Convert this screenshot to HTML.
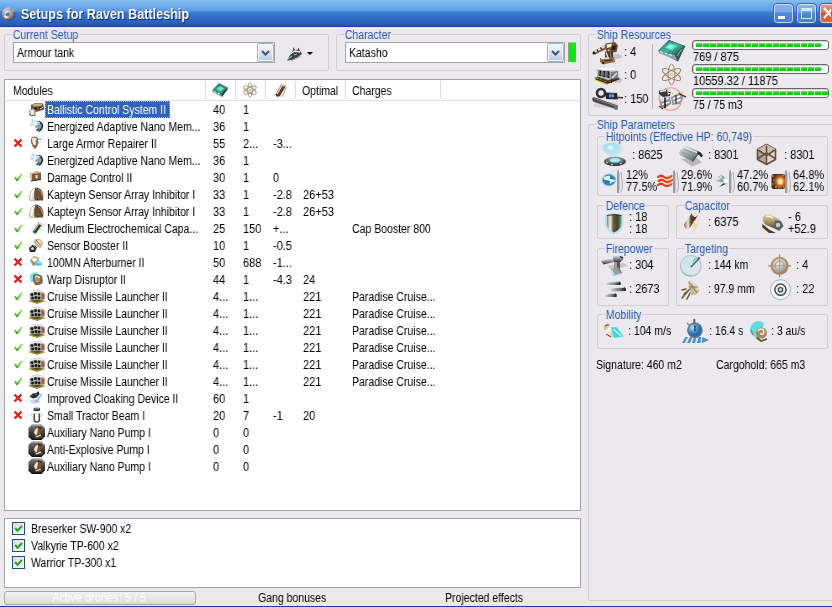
<!DOCTYPE html><html><head><meta charset="utf-8"><style>
*{margin:0;padding:0;box-sizing:border-box}
html,body{width:832px;height:607px;overflow:hidden;background:#EBE9ED}
body{position:relative;font-family:"Liberation Sans",sans-serif;font-size:11px;color:#000}
.a{position:absolute}
.t{position:absolute;white-space:nowrap;font-size:12.5px;line-height:13px;transform-origin:0 0;transform:scaleX(.84);will-change:transform}
.n{transform:scaleX(.88)}
.cap{color:#2356BC;background:#EBE9ED;padding:0 1px}
.grp{position:absolute;border:1px solid #D0CED2;border-radius:2px}
.tb{position:absolute;top:3px;width:21px;height:21px;border:1px solid #3A5FC2;border-radius:4px;box-shadow:inset 0 0 0 1px rgba(235,242,255,.75);background:linear-gradient(#8CB8EE 0,#77A6EA 8px,#4D88DA 9px,#4A7CD2 21px)}
.cl{left:819px;background:linear-gradient(#E59A80 0,#DF7A58 8px,#D9521E 9px,#DE7148 21px)}
.list{position:absolute;background:#fff;border:1px solid #A3A3A3}
.hsep{position:absolute;top:81px;width:2px;height:18px;border-left:1px solid #DCDBDF;border-right:1px solid #fff}
.ic{position:absolute;width:16px;height:16px}
.pb{position:absolute;left:692px;width:137px;height:10px;border:1px solid #686868;border-radius:3px;background:#fff;box-shadow:inset 1px 1px 0 #D4D4D4;overflow:hidden}
.chunks{position:absolute;left:3px;top:2px;height:4px;background:repeating-linear-gradient(90deg,transparent 0,transparent 6px,#fff 6px,#fff 7px),linear-gradient(#86E286 0,#22D422 1.5px,#00CE00 4px)}
</style></head><body>
<svg width="0" height="0" style="position:absolute">
<defs>
<linearGradient id="gBrown" x1="0" y1="0" x2="1" y2="1"><stop offset="0" stop-color="#F2E8DA"/><stop offset=".45" stop-color="#A78A6A"/><stop offset="1" stop-color="#4A3522"/></linearGradient>
<linearGradient id="gBrown2" x1="0" y1="0" x2="0" y2="1"><stop offset="0" stop-color="#C9B08E"/><stop offset="1" stop-color="#5A4028"/></linearGradient>
<linearGradient id="gBrownH" x1="0" y1="0" x2="1" y2="0"><stop offset="0" stop-color="#F8F2EA"/><stop offset=".35" stop-color="#B89A78"/><stop offset=".6" stop-color="#6A4C30"/><stop offset="1" stop-color="#3A2818"/></linearGradient>
<linearGradient id="gSteel" x1="0" y1="0" x2="1" y2="1"><stop offset="0" stop-color="#F4F6F8"/><stop offset=".5" stop-color="#8F9AA6"/><stop offset="1" stop-color="#303840"/></linearGradient>
<linearGradient id="gDark" x1="0" y1="0" x2="0" y2="1"><stop offset="0" stop-color="#8A8A8A"/><stop offset="1" stop-color="#2A2A2A"/></linearGradient>
<linearGradient id="gRig" x1="0" y1="0" x2="0" y2="1"><stop offset="0" stop-color="#7C8088"/><stop offset=".5" stop-color="#3C4048"/><stop offset="1" stop-color="#1A1C20"/></linearGradient>
<radialGradient id="gCyan"><stop offset="0" stop-color="#E8FFFF"/><stop offset=".6" stop-color="#4FD6E6"/><stop offset="1" stop-color="#4FD6E6" stop-opacity="0"/></radialGradient>
<linearGradient id="ck" x1="0" y1="0" x2="0" y2="1"><stop offset="0" stop-color="#B0E468"/><stop offset="1" stop-color="#3CAC18"/></linearGradient>
</defs></svg>
<div class="a" style="left:0;top:0;width:832px;height:27px;background:linear-gradient(#84C0EE 0px,#78B2EC 3px,#5E9AE4 11px,#3B80D2 12px,#3373CD 16px,#2A57B5 25px)"></div>
<div class="a" style="left:0;top:26px;width:832px;height:1px;background:#1A3C9E"></div>
<svg class="a" style="left:0px;top:2px;" width="20" height="22" viewBox="0 0 20 22"><defs><radialGradient id="tor" cx=".4" cy=".35" r=".7"><stop offset="0" stop-color="#F0EAE4"/><stop offset=".55" stop-color="#A89484"/><stop offset="1" stop-color="#4A3C34"/></radialGradient></defs><ellipse cx="9.5" cy="13" rx="6.5" ry="6" fill="#23479A" opacity=".35"/><ellipse cx="8.3" cy="12.3" rx="6.4" ry="6.3" fill="url(#tor)"/><path d="M3 9 Q6 5 10 6 M12 7 L14 10 M4 14 L6 17" stroke="#F4F0EC" stroke-width="1" fill="none" opacity=".7"/><ellipse cx="7.8" cy="12.4" rx="2.4" ry="1.7" transform="rotate(-25 7.8 12.4)" fill="#3A7CD8"/><path d="M5 13.5 Q6 16 8.5 15" stroke="#FFFFFF" stroke-width="1.3" fill="none"/></svg>
<div class="t" style="left:21px;top:6px;font-size:14px;line-height:16px;font-weight:bold;color:#fff;text-shadow:1px 1px 0 #0A246A;transform:scaleX(.9)">Setups for Raven Battleship</div>
<div class="tb" style="left:773px"><div class="a" style="left:4px;top:12px;width:7px;height:3px;background:#fff"></div></div>
<div class="tb" style="left:796px"><div class="a" style="left:4px;top:4px;width:11px;height:11px;border:1px solid #D8E6FA;border-top-width:3px"></div></div>
<div class="tb cl"></div>
<svg class="a" style="left:823px;top:7px;" width="8" height="12" viewBox="0 0 8 12"><path d="M1 1 L10 11 M10 1 L1 11" stroke="#fff" stroke-width="2.2"/></svg>
<div class="grp" style="left:4px;top:34px;width:325px;height:37px"></div>
<div class="t" style="left:12px;top:29px;color:#2356BC;background:#EBE9ED;padding:0 1px">Current Setup</div>
<div class="a" style="left:13px;top:42px;width:262px;height:21px;background:#fff;border:1px solid #A5A5A5"></div>
<div class="t" style="left:17px;top:47px;">Armour tank</div>
<div class="a" style="left:257px;top:43px;width:17px;height:19px;border:1px solid #9CB2DA;border-radius:2px;box-shadow:inset 0 0 0 1px #F4F8FE;background:linear-gradient(#FBFCFF 0,#E0E9F6 35%,#B8CCEA 100%)"></div>
<svg class="a" style="left:261px;top:49px;" width="9" height="8" viewBox="0 0 9 8"><path d="M1 2 L4.5 5.5 L8 2" fill="none" stroke="#4A5262" stroke-width="2"/></svg>
<svg class="a" style="left:282px;top:42px;" width="36" height="24" viewBox="0 0 36 24"><path d="M5 18.5 L8 13 L11 8 L11.5 5 L13 8 L16 7.5 L16.5 5.5 L18 9 L20 11.5 L16 15 L10 18 Z" fill="#3A4044"/><path d="M8 12 L13 9 L18 10" stroke="#F0F4F4" stroke-width="1.3" fill="none"/><path d="M6 17 L10 14 M12 13 L15 12" stroke="#9AB4C0" stroke-width="1.2"/><path d="M9 19 L18 15 L20 12" stroke="#B8B6BA" stroke-width="1" fill="none"/></svg>
<svg class="a" style="left:307px;top:52px;" width="6" height="3" viewBox="0 0 6 3"><path d="M0 0 L6 0 L3 3 Z" fill="#000"/></svg>
<div class="grp" style="left:336px;top:34px;width:245px;height:37px"></div>
<div class="t" style="left:344px;top:29px;color:#2356BC;background:#EBE9ED;padding:0 1px">Character</div>
<div class="a" style="left:345px;top:42px;width:220px;height:21px;background:#fff;border:1px solid #A5A5A5"></div>
<div class="t" style="left:349px;top:47px;">Katasho</div>
<div class="a" style="left:547px;top:43px;width:17px;height:19px;border:1px solid #9CB2DA;border-radius:2px;box-shadow:inset 0 0 0 1px #F4F8FE;background:linear-gradient(#FBFCFF 0,#E0E9F6 35%,#B8CCEA 100%)"></div>
<svg class="a" style="left:551px;top:49px;" width="9" height="8" viewBox="0 0 9 8"><path d="M1 2 L4.5 5.5 L8 2" fill="none" stroke="#4A5262" stroke-width="2"/></svg>
<div class="a" style="left:568px;top:42px;width:9px;height:21px;background:#00F000;border:1px solid #fff;border-left-color:#9A9A9E;border-top-color:#C0B8C8"></div>
<div class="list" style="left:4px;top:79px;width:577px;height:432px"></div>
<div class="t" style="left:13px;top:85px;">Modules</div>
<div class="hsep" style="left:205px"></div>
<div class="hsep" style="left:235px"></div>
<div class="hsep" style="left:265px"></div>
<div class="hsep" style="left:295px"></div>
<div class="hsep" style="left:345px"></div>
<div class="hsep" style="left:440px"></div>
<div class="a" style="left:5px;top:100px;width:575px;height:1px;background:#E2E1E5"></div>
<svg class="a" style="left:206px;top:80px;" width="30" height="20" viewBox="0 0 30 20"><path d="M6.5 10 L13 3.3 L21.6 7.5 L16 16 Z" fill="#1E3234"/><path d="M7 10 L13 4 L21 7.6 L15.5 14 Z" fill="#2E9A88"/><path d="M10.5 9.2 L13.8 6.3 L18 8.2 L14.8 11.2 Z" fill="#6AEAC4"/><path d="M6.5 10 L15.5 14 L16 17 L6.5 12 Z" fill="#7A9C9C"/><path d="M15.5 14 L21.6 7.5 L21.6 9.5 L16 17 Z" fill="#2A4648"/><path d="M8 11.5 L10 12.3 M12 13 L14 14" stroke="#D8F4F0" stroke-width="1"/></svg>
<svg class="a" style="left:236px;top:80px;" width="30" height="20" viewBox="0 0 30 20"><g fill="none" stroke="#A89478" stroke-width=".9"><ellipse cx="14" cy="10" rx="2.4" ry="7"/><ellipse cx="14" cy="10" rx="2.6" ry="7" transform="rotate(60 14 10)"/><ellipse cx="14" cy="10" rx="2.6" ry="7" transform="rotate(-60 14 10)"/></g><circle cx="14" cy="10" r="1.5" fill="#D0C8C0"/></svg>
<svg class="a" style="left:266px;top:80px;" width="30" height="20" viewBox="0 0 30 20"><path d="M9.5 14.5 L15 5 Q17 3.5 19 5 L19.5 6.5 L14 16 Q11.5 17.5 10 16 Z" fill="#5A3A20"/><path d="M11 14 L16 5.5" stroke="#F4EEE6" stroke-width="1.3"/><ellipse cx="17.3" cy="5" rx="2" ry="1.2" transform="rotate(35 17.3 5)" fill="#E0D8D0"/><path d="M18 9 L20 8 L17 15 L15.5 17" stroke="#C8B078" stroke-width="1.2" fill="none"/></svg>
<div class="t" style="left:302px;top:85px;">Optimal</div>
<div class="t" style="left:352px;top:85px;">Charges</div>
<svg class="a" style="left:27px;top:101px;" width="20" height="17" viewBox="0 0 20 17"><path d="M4 4 L8 2 L16 2.5 L17.5 8.5 L9 11 L4 9 Z" fill="#6E5434"/><path d="M5 4 L8 2.5 L15.5 3 L14 5 L7 5.5 Z" fill="#C8AE80"/><path d="M7 6.5 L10 6.5 L10 9 L7 9 Z M12 6 L15 5.5 L15 8 L12 8.5 Z" fill="#2A2016"/><path d="M13 8 L16 6" stroke="#E8DCC0" stroke-width="1"/>
<path d="M2 9 L6 7.5 L8.5 9 L8.5 14 L5 15 L2 13.5 Z" fill="#A8A8A4"/><path d="M3 9.5 L6 8.5 L7 10 L7 13.5 L4 14 Z" fill="#E8E6E0"/><path d="M2 13.5 L5 15 L8.5 14" stroke="#7A5A30" stroke-width="1" fill="none"/></svg>
<div class="a" style="left:45px;top:101px;width:125px;height:17px;background:#3062BA;outline:1px dotted #D8B868;outline-offset:-1px"></div>
<div class="t" style="left:47px;top:104px;color:#fff">Ballistic Control System II</div>
<div class="t n" style="left:213px;top:104px;">40</div>
<div class="t n" style="left:243px;top:104px;">1</div>
<svg class="a" style="left:27px;top:118px;" width="20" height="17" viewBox="0 0 20 17"><circle cx="6" cy="3" r="1.8" fill="#B4DAF4" opacity=".9"/><circle cx="5" cy="6.5" r="1.6" fill="#A8D2F0" opacity=".8"/><circle cx="7" cy="5" r="1.2" fill="#D8EEFA"/>
<path d="M8.5 4 Q12 1.5 15 4.5 L16.5 8 Q15 13 11.5 14 L9 13 L11 10 Q9.5 9 8.5 10.5 L8 8 L11 6.5 Z" fill="#8AA0B0"/><path d="M12 3.5 Q15 5 15.5 8 Q14.5 12 12 13" stroke="#1E3040" stroke-width="1.4" fill="none"/><path d="M9 5.5 Q11 4 13 5" stroke="#F4F8FA" stroke-width="1.3" fill="none"/><path d="M9.5 12.5 L12 10.5" stroke="#2A3A48" stroke-width="1.2"/></svg>
<div class="t" style="left:47px;top:121px;">Energized Adaptive Nano Mem...</div>
<div class="t n" style="left:213px;top:121px;">36</div>
<div class="t n" style="left:243px;top:121px;">1</div>
<svg class="a" style="left:13px;top:138px;" width="10" height="10" viewBox="0 0 10 10"><path d="M1.5 1.5 L8.5 8.5 M8.5 1.5 L1.5 8.5" stroke="#E41A14" stroke-width="2.3"/></svg>
<svg class="a" style="left:27px;top:135px;" width="20" height="17" viewBox="0 0 20 17"><path d="M5 2 Q9 0.8 11 3 L11.5 8 Q10.5 12 8 14 Q6 12.5 4.5 9 Q3 5 5 2 Z" fill="#8A6A48"/><path d="M5 3 Q8 1.8 10 3.5 Q8 6 9 9 Q7 11 6 9 Q4.5 6 5 3 Z" fill="#E8DCC8"/><path d="M7.5 4 Q6.5 7 8 10" stroke="#FFF" stroke-width="1" fill="none"/><path d="M11 4 L15 4" stroke="#5AD8F0" stroke-width="1.5"/></svg>
<div class="t" style="left:47px;top:138px;">Large Armor Repairer II</div>
<div class="t n" style="left:213px;top:138px;">55</div>
<div class="t n" style="left:243px;top:138px;">2...</div>
<div class="t n" style="left:273px;top:138px;">-3...</div>
<svg class="a" style="left:27px;top:152px;" width="20" height="17" viewBox="0 0 20 17"><circle cx="6" cy="3" r="1.8" fill="#B4DAF4" opacity=".9"/><circle cx="5" cy="6.5" r="1.6" fill="#A8D2F0" opacity=".8"/><circle cx="7" cy="5" r="1.2" fill="#D8EEFA"/>
<path d="M8.5 4 Q12 1.5 15 4.5 L16.5 8 Q15 13 11.5 14 L9 13 L11 10 Q9.5 9 8.5 10.5 L8 8 L11 6.5 Z" fill="#8AA0B0"/><path d="M12 3.5 Q15 5 15.5 8 Q14.5 12 12 13" stroke="#1E3040" stroke-width="1.4" fill="none"/><path d="M9 5.5 Q11 4 13 5" stroke="#F4F8FA" stroke-width="1.3" fill="none"/><path d="M9.5 12.5 L12 10.5" stroke="#2A3A48" stroke-width="1.2"/></svg>
<div class="t" style="left:47px;top:155px;">Energized Adaptive Nano Mem...</div>
<div class="t n" style="left:213px;top:155px;">36</div>
<div class="t n" style="left:243px;top:155px;">1</div>
<svg class="a" style="left:13px;top:172px;" width="10" height="10" viewBox="0 0 10 10"><path d="M1.8 5.2 L4.2 8.3 L9 1.8" fill="none" stroke="url(#ck)" stroke-width="1.9" stroke-linejoin="round"/></svg>
<svg class="a" style="left:27px;top:169px;" width="20" height="17" viewBox="0 0 20 17"><path d="M7 4 L8 2.5 L11 2.5 L12 4" stroke="#C8B8A0" stroke-width="1.2" fill="none"/><path d="M3 4.5 L14 3.5 L14 10.5 L4 12 Z" fill="#7A5A38"/><path d="M3 4.5 L5 4.3 L5 11.5 L4 12 Z" fill="#D8C4A8"/><path d="M3 4.5 L14 3.5" stroke="#C8AA88" stroke-width="1"/><rect x="8.5" y="6" width="2.2" height="3.5" fill="#E8D4B8"/><path d="M4 12 L14 10.5" stroke="#3A2616" stroke-width="1"/></svg>
<div class="t" style="left:47px;top:172px;">Damage Control II</div>
<div class="t n" style="left:213px;top:172px;">30</div>
<div class="t n" style="left:243px;top:172px;">1</div>
<div class="t n" style="left:273px;top:172px;">0</div>
<svg class="a" style="left:13px;top:189px;" width="10" height="10" viewBox="0 0 10 10"><path d="M1.8 5.2 L4.2 8.3 L9 1.8" fill="none" stroke="url(#ck)" stroke-width="1.9" stroke-linejoin="round"/></svg>
<svg class="a" style="left:27px;top:186px;" width="20" height="17" viewBox="0 0 20 17"><path d="M2.5 14.5 Q1.5 4 8.5 1.5 Q15.5 1.5 16.5 10 L16 14.5 L12 14.5 L11 10.5 L9 14.5 Z" fill="#6A4C30"/><path d="M2.5 14.5 Q1.5 4 8.5 1.5 Q6.5 6 7.5 14.5 Z" fill="#E4DACC"/><path d="M4.5 12.5 Q4 6 7.5 3" stroke="#FFFFFF" stroke-width="1.5" fill="none"/><path d="M11 3 Q15 5 15.5 11" stroke="#B89A78" stroke-width="1" fill="none"/><path d="M9 14.5 L11 10.5 L12 14.5" fill="#3A2616"/></svg>
<div class="t" style="left:47px;top:189px;">Kapteyn Sensor Array Inhibitor I</div>
<div class="t n" style="left:213px;top:189px;">33</div>
<div class="t n" style="left:243px;top:189px;">1</div>
<div class="t n" style="left:273px;top:189px;">-2.8</div>
<div class="t n" style="left:303px;top:189px;">26+53</div>
<svg class="a" style="left:13px;top:206px;" width="10" height="10" viewBox="0 0 10 10"><path d="M1.8 5.2 L4.2 8.3 L9 1.8" fill="none" stroke="url(#ck)" stroke-width="1.9" stroke-linejoin="round"/></svg>
<svg class="a" style="left:27px;top:203px;" width="20" height="17" viewBox="0 0 20 17"><path d="M2.5 14.5 Q1.5 4 8.5 1.5 Q15.5 1.5 16.5 10 L16 14.5 L12 14.5 L11 10.5 L9 14.5 Z" fill="#6A4C30"/><path d="M2.5 14.5 Q1.5 4 8.5 1.5 Q6.5 6 7.5 14.5 Z" fill="#E4DACC"/><path d="M4.5 12.5 Q4 6 7.5 3" stroke="#FFFFFF" stroke-width="1.5" fill="none"/><path d="M11 3 Q15 5 15.5 11" stroke="#B89A78" stroke-width="1" fill="none"/><path d="M9 14.5 L11 10.5 L12 14.5" fill="#3A2616"/></svg>
<div class="t" style="left:47px;top:206px;">Kapteyn Sensor Array Inhibitor I</div>
<div class="t n" style="left:213px;top:206px;">33</div>
<div class="t n" style="left:243px;top:206px;">1</div>
<div class="t n" style="left:273px;top:206px;">-2.8</div>
<div class="t n" style="left:303px;top:206px;">26+53</div>
<svg class="a" style="left:13px;top:223px;" width="10" height="10" viewBox="0 0 10 10"><path d="M1.8 5.2 L4.2 8.3 L9 1.8" fill="none" stroke="url(#ck)" stroke-width="1.9" stroke-linejoin="round"/></svg>
<svg class="a" style="left:27px;top:220px;" width="20" height="17" viewBox="0 0 20 17"><path d="M5.5 11.5 L12 2.5 L15.5 4.5 L9 13.5 Z" fill="none" stroke="#7EE8F4" stroke-width="2.4" stroke-linejoin="round" opacity=".55"/><path d="M6 11.5 L12 3 Q14 2.5 15 4.5 L9 13 Q7 14 6 11.5 Z" fill="#4A2E18"/><path d="M7 11 L12.5 3.5" stroke="#C8A888" stroke-width="1.2"/><ellipse cx="13.5" cy="3.7" rx="1.8" ry="1" transform="rotate(35 13.5 3.7)" fill="#F0E8E0"/></svg>
<div class="t" style="left:47px;top:223px;">Medium Electrochemical Capa...</div>
<div class="t n" style="left:213px;top:223px;">25</div>
<div class="t n" style="left:243px;top:223px;">150</div>
<div class="t n" style="left:273px;top:223px;">+...</div>
<div class="t" style="left:352px;top:223px;">Cap Booster 800</div>
<svg class="a" style="left:13px;top:240px;" width="10" height="10" viewBox="0 0 10 10"><path d="M1.8 5.2 L4.2 8.3 L9 1.8" fill="none" stroke="url(#ck)" stroke-width="1.9" stroke-linejoin="round"/></svg>
<svg class="a" style="left:27px;top:237px;" width="20" height="17" viewBox="0 0 20 17"><path d="M8 2 Q13 0.5 15.5 5 Q16 9 13 11 L9 9 L7 5 Z" fill="#D8A880"/><path d="M9 3 Q12 2 14 5 Q14 8 12 9 L10 7 Z" fill="#F0E8E0"/><path d="M9 3 L13 8" stroke="#8A6A4A" stroke-width="1"/>
<path d="M2 11 L6 7.5 L10 10 L8 15 L3 15 Z" fill="#2A2420"/><circle cx="5.5" cy="11.5" r="1.6" fill="#D8D0C8"/><path d="M6 8 L9 10.5" stroke="#C89870" stroke-width="1"/></svg>
<div class="t" style="left:47px;top:240px;">Sensor Booster II</div>
<div class="t n" style="left:213px;top:240px;">10</div>
<div class="t n" style="left:243px;top:240px;">1</div>
<div class="t n" style="left:273px;top:240px;">-0.5</div>
<svg class="a" style="left:13px;top:257px;" width="10" height="10" viewBox="0 0 10 10"><path d="M1.5 1.5 L8.5 8.5 M8.5 1.5 L1.5 8.5" stroke="#E41A14" stroke-width="2.3"/></svg>
<svg class="a" style="left:27px;top:254px;" width="20" height="17" viewBox="0 0 20 17"><path d="M3 6 L7 2 L12 4 L11 10 L6 12 Z" fill="#B08A60"/><path d="M4 6 L7 3 L11 5 L9 9 Z" fill="#F4F0EA"/><path d="M9 6 L15 8.5 L15 11 L10 12 L8 10 Z" fill="#40D0DC"/><path d="M10 8 L14 9.5" stroke="#C8F8FF" stroke-width="1"/></svg>
<div class="t" style="left:47px;top:257px;">100MN Afterburner II</div>
<div class="t n" style="left:213px;top:257px;">50</div>
<div class="t n" style="left:243px;top:257px;">688</div>
<div class="t n" style="left:273px;top:257px;">-1...</div>
<svg class="a" style="left:13px;top:274px;" width="10" height="10" viewBox="0 0 10 10"><path d="M1.5 1.5 L8.5 8.5 M8.5 1.5 L1.5 8.5" stroke="#E41A14" stroke-width="2.3"/></svg>
<svg class="a" style="left:27px;top:271px;" width="20" height="17" viewBox="0 0 20 17"><path d="M3 4 Q6 0.5 11 1.5 L5 12 Q2.5 9 3 4 Z" fill="#58D8E8" opacity=".8"/><path d="M6 4 Q11 1.5 15 5 L16 11 Q13 15 8 14 L6 10 Z" fill="#8A6644"/><path d="M8 5 Q11 3.5 13 6 L13 10 L9 11 Z" fill="#EDE4D8"/><path d="M10 6 L10 10 M12 7 L12 10" stroke="#5A3E26" stroke-width="1"/></svg>
<div class="t" style="left:47px;top:274px;">Warp Disruptor II</div>
<div class="t n" style="left:213px;top:274px;">44</div>
<div class="t n" style="left:243px;top:274px;">1</div>
<div class="t n" style="left:273px;top:274px;">-4.3</div>
<div class="t n" style="left:303px;top:274px;">24</div>
<svg class="a" style="left:13px;top:291px;" width="10" height="10" viewBox="0 0 10 10"><path d="M1.8 5.2 L4.2 8.3 L9 1.8" fill="none" stroke="url(#ck)" stroke-width="1.9" stroke-linejoin="round"/></svg>
<svg class="a" style="left:27px;top:288px;" width="20" height="17" viewBox="0 0 20 17"><path d="M2.5 12.5 L2.5 5 Q4.5 2 10 1.8 Q16 2.2 17.5 5 L17.5 12 L10 14 Z" fill="#B4B4B2"/><path d="M3.5 5 Q6 2.8 10 2.8 Q15 3 16 5" stroke="#F4F4F2" stroke-width="1.2" fill="none"/><g fill="#1A1A1A"><circle cx="5" cy="6.5" r="1.5"/><circle cx="8.5" cy="5.5" r="1.5"/><circle cx="12" cy="6" r="1.4"/><circle cx="5.5" cy="10" r="1.5"/><circle cx="9" cy="9.5" r="1.6"/><circle cx="12.2" cy="10" r="1.4"/></g><path d="M14.5 4.5 L17.5 6 L17.5 10.5 L14.5 11.5 Z" fill="#A85A38"/><path d="M1.5 13 L10 15.8 L18.5 13 L10 11.5 Z" fill="#5A5020"/><path d="M3 13.3 L10 14.8 L17 13" stroke="#C8B030" stroke-width=".8" fill="none"/></svg>
<div class="t" style="left:47px;top:291px;">Cruise Missile Launcher II</div>
<div class="t n" style="left:213px;top:291px;">4...</div>
<div class="t n" style="left:243px;top:291px;">1...</div>
<div class="t n" style="left:303px;top:291px;">221</div>
<div class="t" style="left:352px;top:291px;">Paradise Cruise...</div>
<svg class="a" style="left:13px;top:308px;" width="10" height="10" viewBox="0 0 10 10"><path d="M1.8 5.2 L4.2 8.3 L9 1.8" fill="none" stroke="url(#ck)" stroke-width="1.9" stroke-linejoin="round"/></svg>
<svg class="a" style="left:27px;top:305px;" width="20" height="17" viewBox="0 0 20 17"><path d="M2.5 12.5 L2.5 5 Q4.5 2 10 1.8 Q16 2.2 17.5 5 L17.5 12 L10 14 Z" fill="#B4B4B2"/><path d="M3.5 5 Q6 2.8 10 2.8 Q15 3 16 5" stroke="#F4F4F2" stroke-width="1.2" fill="none"/><g fill="#1A1A1A"><circle cx="5" cy="6.5" r="1.5"/><circle cx="8.5" cy="5.5" r="1.5"/><circle cx="12" cy="6" r="1.4"/><circle cx="5.5" cy="10" r="1.5"/><circle cx="9" cy="9.5" r="1.6"/><circle cx="12.2" cy="10" r="1.4"/></g><path d="M14.5 4.5 L17.5 6 L17.5 10.5 L14.5 11.5 Z" fill="#A85A38"/><path d="M1.5 13 L10 15.8 L18.5 13 L10 11.5 Z" fill="#5A5020"/><path d="M3 13.3 L10 14.8 L17 13" stroke="#C8B030" stroke-width=".8" fill="none"/></svg>
<div class="t" style="left:47px;top:308px;">Cruise Missile Launcher II</div>
<div class="t n" style="left:213px;top:308px;">4...</div>
<div class="t n" style="left:243px;top:308px;">1...</div>
<div class="t n" style="left:303px;top:308px;">221</div>
<div class="t" style="left:352px;top:308px;">Paradise Cruise...</div>
<svg class="a" style="left:13px;top:325px;" width="10" height="10" viewBox="0 0 10 10"><path d="M1.8 5.2 L4.2 8.3 L9 1.8" fill="none" stroke="url(#ck)" stroke-width="1.9" stroke-linejoin="round"/></svg>
<svg class="a" style="left:27px;top:322px;" width="20" height="17" viewBox="0 0 20 17"><path d="M2.5 12.5 L2.5 5 Q4.5 2 10 1.8 Q16 2.2 17.5 5 L17.5 12 L10 14 Z" fill="#B4B4B2"/><path d="M3.5 5 Q6 2.8 10 2.8 Q15 3 16 5" stroke="#F4F4F2" stroke-width="1.2" fill="none"/><g fill="#1A1A1A"><circle cx="5" cy="6.5" r="1.5"/><circle cx="8.5" cy="5.5" r="1.5"/><circle cx="12" cy="6" r="1.4"/><circle cx="5.5" cy="10" r="1.5"/><circle cx="9" cy="9.5" r="1.6"/><circle cx="12.2" cy="10" r="1.4"/></g><path d="M14.5 4.5 L17.5 6 L17.5 10.5 L14.5 11.5 Z" fill="#A85A38"/><path d="M1.5 13 L10 15.8 L18.5 13 L10 11.5 Z" fill="#5A5020"/><path d="M3 13.3 L10 14.8 L17 13" stroke="#C8B030" stroke-width=".8" fill="none"/></svg>
<div class="t" style="left:47px;top:325px;">Cruise Missile Launcher II</div>
<div class="t n" style="left:213px;top:325px;">4...</div>
<div class="t n" style="left:243px;top:325px;">1...</div>
<div class="t n" style="left:303px;top:325px;">221</div>
<div class="t" style="left:352px;top:325px;">Paradise Cruise...</div>
<svg class="a" style="left:13px;top:342px;" width="10" height="10" viewBox="0 0 10 10"><path d="M1.8 5.2 L4.2 8.3 L9 1.8" fill="none" stroke="url(#ck)" stroke-width="1.9" stroke-linejoin="round"/></svg>
<svg class="a" style="left:27px;top:339px;" width="20" height="17" viewBox="0 0 20 17"><path d="M2.5 12.5 L2.5 5 Q4.5 2 10 1.8 Q16 2.2 17.5 5 L17.5 12 L10 14 Z" fill="#B4B4B2"/><path d="M3.5 5 Q6 2.8 10 2.8 Q15 3 16 5" stroke="#F4F4F2" stroke-width="1.2" fill="none"/><g fill="#1A1A1A"><circle cx="5" cy="6.5" r="1.5"/><circle cx="8.5" cy="5.5" r="1.5"/><circle cx="12" cy="6" r="1.4"/><circle cx="5.5" cy="10" r="1.5"/><circle cx="9" cy="9.5" r="1.6"/><circle cx="12.2" cy="10" r="1.4"/></g><path d="M14.5 4.5 L17.5 6 L17.5 10.5 L14.5 11.5 Z" fill="#A85A38"/><path d="M1.5 13 L10 15.8 L18.5 13 L10 11.5 Z" fill="#5A5020"/><path d="M3 13.3 L10 14.8 L17 13" stroke="#C8B030" stroke-width=".8" fill="none"/></svg>
<div class="t" style="left:47px;top:342px;">Cruise Missile Launcher II</div>
<div class="t n" style="left:213px;top:342px;">4...</div>
<div class="t n" style="left:243px;top:342px;">1...</div>
<div class="t n" style="left:303px;top:342px;">221</div>
<div class="t" style="left:352px;top:342px;">Paradise Cruise...</div>
<svg class="a" style="left:13px;top:359px;" width="10" height="10" viewBox="0 0 10 10"><path d="M1.8 5.2 L4.2 8.3 L9 1.8" fill="none" stroke="url(#ck)" stroke-width="1.9" stroke-linejoin="round"/></svg>
<svg class="a" style="left:27px;top:356px;" width="20" height="17" viewBox="0 0 20 17"><path d="M2.5 12.5 L2.5 5 Q4.5 2 10 1.8 Q16 2.2 17.5 5 L17.5 12 L10 14 Z" fill="#B4B4B2"/><path d="M3.5 5 Q6 2.8 10 2.8 Q15 3 16 5" stroke="#F4F4F2" stroke-width="1.2" fill="none"/><g fill="#1A1A1A"><circle cx="5" cy="6.5" r="1.5"/><circle cx="8.5" cy="5.5" r="1.5"/><circle cx="12" cy="6" r="1.4"/><circle cx="5.5" cy="10" r="1.5"/><circle cx="9" cy="9.5" r="1.6"/><circle cx="12.2" cy="10" r="1.4"/></g><path d="M14.5 4.5 L17.5 6 L17.5 10.5 L14.5 11.5 Z" fill="#A85A38"/><path d="M1.5 13 L10 15.8 L18.5 13 L10 11.5 Z" fill="#5A5020"/><path d="M3 13.3 L10 14.8 L17 13" stroke="#C8B030" stroke-width=".8" fill="none"/></svg>
<div class="t" style="left:47px;top:359px;">Cruise Missile Launcher II</div>
<div class="t n" style="left:213px;top:359px;">4...</div>
<div class="t n" style="left:243px;top:359px;">1...</div>
<div class="t n" style="left:303px;top:359px;">221</div>
<div class="t" style="left:352px;top:359px;">Paradise Cruise...</div>
<svg class="a" style="left:13px;top:376px;" width="10" height="10" viewBox="0 0 10 10"><path d="M1.8 5.2 L4.2 8.3 L9 1.8" fill="none" stroke="url(#ck)" stroke-width="1.9" stroke-linejoin="round"/></svg>
<svg class="a" style="left:27px;top:373px;" width="20" height="17" viewBox="0 0 20 17"><path d="M2.5 12.5 L2.5 5 Q4.5 2 10 1.8 Q16 2.2 17.5 5 L17.5 12 L10 14 Z" fill="#B4B4B2"/><path d="M3.5 5 Q6 2.8 10 2.8 Q15 3 16 5" stroke="#F4F4F2" stroke-width="1.2" fill="none"/><g fill="#1A1A1A"><circle cx="5" cy="6.5" r="1.5"/><circle cx="8.5" cy="5.5" r="1.5"/><circle cx="12" cy="6" r="1.4"/><circle cx="5.5" cy="10" r="1.5"/><circle cx="9" cy="9.5" r="1.6"/><circle cx="12.2" cy="10" r="1.4"/></g><path d="M14.5 4.5 L17.5 6 L17.5 10.5 L14.5 11.5 Z" fill="#A85A38"/><path d="M1.5 13 L10 15.8 L18.5 13 L10 11.5 Z" fill="#5A5020"/><path d="M3 13.3 L10 14.8 L17 13" stroke="#C8B030" stroke-width=".8" fill="none"/></svg>
<div class="t" style="left:47px;top:376px;">Cruise Missile Launcher II</div>
<div class="t n" style="left:213px;top:376px;">4...</div>
<div class="t n" style="left:243px;top:376px;">1...</div>
<div class="t n" style="left:303px;top:376px;">221</div>
<div class="t" style="left:352px;top:376px;">Paradise Cruise...</div>
<svg class="a" style="left:13px;top:393px;" width="10" height="10" viewBox="0 0 10 10"><path d="M1.5 1.5 L8.5 8.5 M8.5 1.5 L1.5 8.5" stroke="#E41A14" stroke-width="2.3"/></svg>
<svg class="a" style="left:27px;top:390px;" width="20" height="17" viewBox="0 0 20 17"><ellipse cx="8" cy="11.5" rx="5" ry="2.2" fill="#D8D8DC"/><path d="M2.5 6.5 L5.5 3.5 L9 3.2 L11.5 1 L12.5 4 L9.5 7.5 L6 8.5 Z" fill="#26282C"/><path d="M4 6 L6 5 M8 5 L10 4" stroke="#8A8E94" stroke-width=".8"/><path d="M7.5 11.5 L13.5 3.5 L15.5 4.5 L9.5 12.5 Z" fill="#5AAEEA" opacity=".85"/><path d="M9 10.5 L14 4.2" stroke="#C8E8FA" stroke-width="1"/></svg>
<div class="t" style="left:47px;top:393px;">Improved Cloaking Device II</div>
<div class="t n" style="left:213px;top:393px;">60</div>
<div class="t n" style="left:243px;top:393px;">1</div>
<svg class="a" style="left:13px;top:410px;" width="10" height="10" viewBox="0 0 10 10"><path d="M1.5 1.5 L8.5 8.5 M8.5 1.5 L1.5 8.5" stroke="#E41A14" stroke-width="2.3"/></svg>
<svg class="a" style="left:27px;top:407px;" width="20" height="17" viewBox="0 0 20 17"><rect x="6.5" y="0.8" width="6.5" height="3.2" rx="1.2" fill="#34363A"/><path d="M7.5 1.8 L12 1.8" stroke="#B8BCC0" stroke-width=".8"/><path d="M5 6 Q3.5 9 6 10 M14.5 6 Q16 9 13.5 10" stroke="#9AD4F0" stroke-width=".9" fill="none"/><path d="M7.3 6.5 L7.3 12.5 Q7.3 15 9.8 15 Q12.3 15 12.3 12.5 L12.3 6.5" fill="none" stroke="#4A5040" stroke-width="1.6"/><path d="M4.5 12 Q5 15 8 15.5 M15 12.5 Q14.5 15 12 15.5" stroke="#A4D8F0" stroke-width=".8" fill="none"/></svg>
<div class="t" style="left:47px;top:410px;">Small Tractor Beam I</div>
<div class="t n" style="left:213px;top:410px;">20</div>
<div class="t n" style="left:243px;top:410px;">7</div>
<div class="t n" style="left:273px;top:410px;">-1</div>
<div class="t n" style="left:303px;top:410px;">20</div>
<svg class="a" style="left:27px;top:424px;" width="20" height="17" viewBox="0 0 20 17"><path d="M5 0.5 L14.5 0.5 L18 4 L18 12.5 L14.5 16 L5 16 L1.5 12.5 L1.5 4 Z" fill="url(#gRig)"/><path d="M5 1 L14.5 1 L17.5 4" stroke="#B8BCC2" stroke-width="1" fill="none"/><path d="M2 12.5 L5 15.5 L14.5 15.5" stroke="#101214" stroke-width="1" fill="none"/>
<path d="M8 13.5 Q7.5 10 6 8.5 L7 7.5 Q6.5 5 9 3 Q12 2 14 3.5 Q15 6 14 8 L13 10 L15 13.5 Z" fill="#7A5430"/><path d="M7 8.5 L8 6 Q9 4 11 4 L10.5 8 Q10 10 9 11.5 L8 10 Z" fill="#F4E4CC"/><path d="M9 13 L14 11" stroke="#E8D4B4" stroke-width="1.3"/><path d="M11 3.5 Q13.5 3 14.5 5" stroke="#3A2410" stroke-width="1.2" fill="none"/></svg>
<div class="t" style="left:47px;top:427px;">Auxiliary Nano Pump I</div>
<div class="t n" style="left:213px;top:427px;">0</div>
<div class="t n" style="left:243px;top:427px;">0</div>
<svg class="a" style="left:27px;top:441px;" width="20" height="17" viewBox="0 0 20 17"><path d="M5 0.5 L14.5 0.5 L18 4 L18 12.5 L14.5 16 L5 16 L1.5 12.5 L1.5 4 Z" fill="url(#gRig)"/><path d="M5 1 L14.5 1 L17.5 4" stroke="#B8BCC2" stroke-width="1" fill="none"/><path d="M2 12.5 L5 15.5 L14.5 15.5" stroke="#101214" stroke-width="1" fill="none"/>
<path d="M8 13.5 Q7.5 10 6 8.5 L7 7.5 Q6.5 5 9 3 Q12 2 14 3.5 Q15 6 14 8 L13 10 L15 13.5 Z" fill="#7A5430"/><path d="M7 8.5 L8 6 Q9 4 11 4 L10.5 8 Q10 10 9 11.5 L8 10 Z" fill="#F4E4CC"/><path d="M9 13 L14 11" stroke="#E8D4B4" stroke-width="1.3"/><path d="M11 3.5 Q13.5 3 14.5 5" stroke="#3A2410" stroke-width="1.2" fill="none"/></svg>
<div class="t" style="left:47px;top:444px;">Anti-Explosive Pump I</div>
<div class="t n" style="left:213px;top:444px;">0</div>
<div class="t n" style="left:243px;top:444px;">0</div>
<svg class="a" style="left:27px;top:458px;" width="20" height="17" viewBox="0 0 20 17"><path d="M5 0.5 L14.5 0.5 L18 4 L18 12.5 L14.5 16 L5 16 L1.5 12.5 L1.5 4 Z" fill="url(#gRig)"/><path d="M5 1 L14.5 1 L17.5 4" stroke="#B8BCC2" stroke-width="1" fill="none"/><path d="M2 12.5 L5 15.5 L14.5 15.5" stroke="#101214" stroke-width="1" fill="none"/>
<path d="M8 13.5 Q7.5 10 6 8.5 L7 7.5 Q6.5 5 9 3 Q12 2 14 3.5 Q15 6 14 8 L13 10 L15 13.5 Z" fill="#7A5430"/><path d="M7 8.5 L8 6 Q9 4 11 4 L10.5 8 Q10 10 9 11.5 L8 10 Z" fill="#F4E4CC"/><path d="M9 13 L14 11" stroke="#E8D4B4" stroke-width="1.3"/><path d="M11 3.5 Q13.5 3 14.5 5" stroke="#3A2410" stroke-width="1.2" fill="none"/></svg>
<div class="t" style="left:47px;top:461px;">Auxiliary Nano Pump I</div>
<div class="t n" style="left:213px;top:461px;">0</div>
<div class="t n" style="left:243px;top:461px;">0</div>
<div class="list" style="left:4px;top:518px;width:577px;height:70px"></div>
<div class="a" style="left:12px;top:522px;width:13px;height:13px;border:1px solid #1C5180;background:linear-gradient(135deg,#DCDCD7,#F8F8F6)"></div>
<svg class="a" style="left:14px;top:524px;" width="9" height="9" viewBox="0 0 9 9"><path d="M1.2 4 L3.5 6.8 L8 2" fill="none" stroke="#21A121" stroke-width="2"/></svg>
<div class="t" style="left:31px;top:523px;">Breserker SW-900 x2</div>
<div class="a" style="left:12px;top:539px;width:13px;height:13px;border:1px solid #1C5180;background:linear-gradient(135deg,#DCDCD7,#F8F8F6)"></div>
<svg class="a" style="left:14px;top:541px;" width="9" height="9" viewBox="0 0 9 9"><path d="M1.2 4 L3.5 6.8 L8 2" fill="none" stroke="#21A121" stroke-width="2"/></svg>
<div class="t" style="left:31px;top:540px;">Valkyrie TP-600 x2</div>
<div class="a" style="left:12px;top:556px;width:13px;height:13px;border:1px solid #1C5180;background:linear-gradient(135deg,#DCDCD7,#F8F8F6)"></div>
<svg class="a" style="left:14px;top:558px;" width="9" height="9" viewBox="0 0 9 9"><path d="M1.2 4 L3.5 6.8 L8 2" fill="none" stroke="#21A121" stroke-width="2"/></svg>
<div class="t" style="left:31px;top:557px;">Warrior TP-300 x1</div>
<div class="a" style="left:4px;top:591px;width:192px;height:14px;border:1px solid #A7A6AA;border-radius:3px;background:linear-gradient(#F2F1F4,#DAD9DD)"></div>
<div class="t" style="left:52px;top:592px;color:#fff;transform:scaleX(.88)">Active drones: 5 / 5</div>
<div class="t" style="left:258px;top:592px;">Gang bonuses</div>
<div class="t" style="left:445px;top:592px;">Projected effects</div>
<div class="a" style="left:0;top:606px;width:832px;height:1px;background:#1B3E9E"></div>
<div class="grp" style="left:588px;top:34px;width:251px;height:82px"></div>
<div class="t" style="left:596px;top:29px;color:#2356BC;background:#EBE9ED;padding:0 1px">Ship Resources</div>
<div class="a" style="left:652px;top:44px;width:1px;height:65px;background:#B4B2B6"></div>
<svg class="a" style="left:590px;top:40px;" width="34" height="26" viewBox="0 0 34 26"><ellipse cx="25" cy="16.5" rx="7" ry="2.5" fill="#C4C2C6"/>
<path d="M3 11.5 L15 5 L17.5 8.5 L5 14.5 Z" fill="#8A6A48"/><path d="M3.5 11.5 L14.5 5.5 L15.5 7 L4.5 13 Z" fill="#E8E2DA"/><path d="M7 9.5 L8.5 12 M10.5 7.5 L12 10" stroke="#2A2018" stroke-width="1.3"/><circle cx="4" cy="13" r="1.5" fill="#1A1410"/>
<path d="M15.5 3.5 L25 2 L28 5.5 L26.5 12 L18 13.5 L15 8 Z" fill="#6A4C30"/><path d="M16.5 4.5 L22 3.5 L21 7 L17 8 Z" fill="#F0ECE6"/><path d="M22 6 L26 5.5 L25 10 L21.5 10 Z" fill="#2A1E14"/><path d="M18 10 L21 12" stroke="#E8DCC8" stroke-width="1.2"/>
<path d="M15 11.5 L23 11 L23 18 L15 18 Z" fill="#4A3420"/><path d="M16 12.5 L18 17" stroke="#F0E6D6" stroke-width="1.4"/><path d="M20 12 L21 17" stroke="#A88460" stroke-width="1"/>
<path d="M10 18 L24 17 L25 22 L13 24.5 L10 22 Z" fill="#8A6A4A"/><path d="M11 18.5 L19 18" stroke="#F4EEE6" stroke-width="1.5"/><path d="M14 21 L22 20" stroke="#3A2818" stroke-width="1"/><circle cx="13" cy="23" r="1.1" fill="#1A1410"/></svg>
<div class="t n" style="left:624px;top:46px;">: 4</div>
<svg class="a" style="left:590px;top:64px;" width="34" height="26" viewBox="0 0 34 26"><ellipse cx="28" cy="16" rx="4" ry="3" fill="#C8C6CA"/><path d="M4.5 13 L24 12.5 L31 15 L17 20.5 L5 16 Z" fill="#A88A20"/><path d="M6 15 L17 19 L29 15 M9 14 L20 18.5 M13 13.5 L23 17 M18 13 L26 16 M8 16 L12 13.5 M12 17.5 L17 13 M16 19 L22 13.5 M21 19 L26 14" stroke="#2A2208" stroke-width="1" fill="none"/><path d="M5 16 L17 20.5" stroke="#E8C838" stroke-width="1"/>
<path d="M6.5 5 L11 3.4 L26 4.5 L28.7 7 L28.7 14 L18 16.5 L7 13 Z" fill="#C8CACC"/><path d="M7 4.8 L11 3.6 L26 4.6 L27.5 6.3 L12 6 Z" fill="#FAFAFA"/>
<path d="M8.5 6.5 L11.5 6.5 L11.5 12.5 L8.5 11.5 Z M12.5 7 L15.5 7 L15.5 13.5 L12.5 12.8 Z M16.5 7.3 L19.5 7.3 L19.5 14.3 L16.5 13.6 Z" fill="#141414"/><path d="M9.5 7 L10 11 M13.5 7.5 L14 12 M17.5 8 L18 13" stroke="#9A9A9A" stroke-width=".7"/><path d="M20.5 8 L28 7 L28 13.5 L20.5 15.5 Z" fill="#7A7E82"/><path d="M22 14 L27 9" stroke="#F0F0F0" stroke-width="1.2"/><path d="M7 13 L18 16.5 L28.7 14" stroke="#3A3A3A" stroke-width="1" fill="none"/></svg>
<div class="t n" style="left:624px;top:69px;">: 0</div>
<svg class="a" style="left:590px;top:87px;" width="34" height="26" viewBox="0 0 34 26"><ellipse cx="16" cy="18" rx="13" ry="3" fill="#D6D4D8"/>
<circle cx="11" cy="6" r="4" fill="none" stroke="#303038" stroke-width="2.6"/><path d="M15 5.5 L27 6 L28 12.5 L16 12 Z" fill="#26262e"/><rect x="19" y="6.5" width="5" height="4" fill="#4868B8"/><path d="M20 8 L20 10 M23 8 L23 10" stroke="#B8D8F8" stroke-width="1"/><path d="M28 10.5 L33 10.7" stroke="#303038" stroke-width="1.5"/>
<path d="M2 11.5 L4 10 L27.5 18.5 L27 22.5 L3 14.5 Z" fill="#4a4852"/><path d="M4 11.5 L26 19" stroke="#8a8a94" stroke-width="1"/><ellipse cx="26" cy="20.5" rx="2" ry="2.5" fill="#707078"/></svg>
<div class="t n" style="left:624px;top:93px;">: 150</div>
<svg class="a" style="left:655px;top:38px;" width="34" height="26" viewBox="0 0 34 26"><defs><linearGradient id="cpuT" x1="0" y1="0" x2="1" y2="1"><stop offset="0" stop-color="#2E6A64"/><stop offset=".5" stop-color="#3ABAA0"/><stop offset="1" stop-color="#1E4A48"/></linearGradient></defs><path d="M3 13 L14 2 L30 8 L23 23.5 Z" fill="#1E2A2C"/><path d="M3.5 12.5 L14 2.5 L29 8 L20 17 Z" fill="url(#cpuT)"/><path d="M9.5 9.5 L15 5 L22.5 8 L17 12.5 Z" fill="#58E0BC"/><path d="M12 9 L15.5 6.5 L19.5 8.2 L16 11 Z" fill="#9AF8DC"/><path d="M3.5 12.5 L20 17 L22.5 23 L4 15 Z" fill="#8AA4A4"/><path d="M5 13.5 L8 14.5 M10 15 L12 15.8 M14 16.5 L17 17.5" stroke="#DCF4F0" stroke-width="1.2"/><path d="M20 17 L29 8 L30 9 L22.5 23 Z" fill="#3A5A5C"/><path d="M22 18 L27 11" stroke="#8ADAD0" stroke-width=".8"/></svg>
<svg class="a" style="left:655px;top:62px;" width="34" height="26" viewBox="0 0 34 26"><g fill="none" stroke="#A08458" stroke-width="1"><ellipse cx="16.5" cy="12.5" rx="3.4" ry="10.3"/><ellipse cx="16.5" cy="12.5" rx="3.6" ry="10.3" transform="rotate(60 16.5 12.5)"/><ellipse cx="16.5" cy="12.5" rx="3.6" ry="10.3" transform="rotate(-60 16.5 12.5)"/></g><circle cx="16.5" cy="12.5" r="1.8" fill="#D8CCBE"/></svg>
<svg class="a" style="left:655px;top:86px;" width="34" height="26" viewBox="0 0 34 26"><circle cx="15.5" cy="13" r="11.3" fill="none" stroke="#EE9A88" stroke-width="1.1"/>
<path d="M4 4.5 L12 3.5 L13 9 L15 7.5 L15 10 L8 11 L4 8 Z" fill="#3A3A3C"/><path d="M5 5.5 L11 4.5" stroke="#F0F0F0" stroke-width="1.4"/><path d="M13 6 L16 7" stroke="#222" stroke-width="1"/>
<path d="M5 14 L15 10.5 L16 18 L10 22 L6 21 Z" fill="#8A8A8E"/><path d="M6 15 L14 12 M7 18.5 L14.5 16" stroke="#FAFAFA" stroke-width="1.8"/><path d="M10 11.5 L10 22" stroke="#151515" stroke-width="1.5"/><path d="M4 20 L8 23" stroke="#333" stroke-width="1.2"/>
<path d="M16 11 L24 7 L29 11 L25 18 L17 19 Z" fill="#9A9A9E"/><path d="M18 13 L25 10 M19 16.5 L25.5 13.5" stroke="#FCFCFC" stroke-width="1.8"/><path d="M24 7.5 L31 11" stroke="#222" stroke-width="1.3"/><path d="M21 9 L21 18" stroke="#2A2A2A" stroke-width="1.2"/>
<path d="M12 4 L13 3 M17 8 L18 7 M27 7 L28 6" stroke="#E8C040" stroke-width="1.2"/></svg>
<div class="pb" style="top:40px"><div class="chunks" style="width:126px"></div></div>
<div class="t n" style="left:693px;top:51px;">769 / 875</div>
<div class="pb" style="top:64px"><div class="chunks" style="width:126px"></div></div>
<div class="t n" style="left:693px;top:75px;">10559.32 / 11875</div>
<div class="pb" style="top:88px"><div class="chunks" style="width:132px"></div></div>
<div class="t" style="left:693px;top:99px;">75 / 75 m3</div>
<div class="grp" style="left:588px;top:124px;width:251px;height:477px"></div>
<div class="t" style="left:596px;top:119px;color:#2356BC;background:#EBE9ED;padding:0 1px">Ship Parameters</div>
<div class="grp" style="left:597px;top:136px;width:231px;height:60px"></div>
<div class="t" style="left:605px;top:131px;color:#2356BC;background:#EBE9ED;padding:0 1px">Hitpoints (Effective HP: 60,749)</div>
<svg class="a" style="left:597px;top:140px;" width="34" height="28" viewBox="0 0 34 28"><defs><radialGradient id="shG" cx=".4" cy=".3" r=".65"><stop offset="0" stop-color="#F4FCFF"/><stop offset=".3" stop-color="#A4E0F0"/><stop offset=".7" stop-color="#BCE2EC" stop-opacity=".6"/><stop offset="1" stop-color="#D8EAF0" stop-opacity="0"/></radialGradient><radialGradient id="shB" cx=".5" cy=".3" r=".7"><stop offset="0" stop-color="#E8F8FA"/><stop offset=".3" stop-color="#8AA0A4"/><stop offset=".7" stop-color="#4A4C50"/><stop offset="1" stop-color="#202124"/></radialGradient></defs>
<path d="M4 7 Q8 2 16 2.5 Q25 3 28 8 Q26 13 21 17 L18 20 L15 17 Q7 13 4 7 Z" fill="url(#shG)"/><path d="M11 9 Q16 12 18 20 Q20 12 25 9" fill="#B4E8F4" opacity=".55"/>
<ellipse cx="18" cy="21.4" rx="11" ry="4.6" fill="url(#shB)"/><ellipse cx="18" cy="20.3" rx="5" ry="2" fill="#9EEEF8"/><path d="M9 22 L11 23 M14 24.5 L16 25 M23 24 L25 23" stroke="#E0E0E0" stroke-width="1"/></svg>
<div class="t n" style="left:632px;top:149px;">: 8625</div>
<svg class="a" style="left:672px;top:140px;" width="34" height="28" viewBox="0 0 34 28"><defs><linearGradient id="arG" x1="0" y1="0" x2=".6" y2="1"><stop offset="0" stop-color="#E4E8EA"/><stop offset=".5" stop-color="#A4AAAE"/><stop offset="1" stop-color="#5A6064"/></linearGradient></defs>
<path d="M9 19 L20 26.5 L30 22.5 L24 17 Z" fill="#A8A6AA" opacity=".75"/>
<path d="M7 13.5 Q9 7 15 6 L26 11 Q29 12 30.5 15.5 L29 17 Q27.5 14.5 25.5 14.5 L20.5 21.5 Z" fill="url(#arG)"/>
<path d="M9.5 12 L21.5 18 M12 9 L24 14.5 M8.5 15 L20 20.5" stroke="#8A9094" stroke-width=".8"/><path d="M13 7.5 L25 12.5" stroke="#F8FAFA" stroke-width="1"/>
<path d="M25.5 11.2 Q29.5 12 31 16 L29 17.2 Q28 14.3 25.5 14.5 Z" fill="#2A2C2E"/><path d="M20.5 21.5 L25.5 14.5" stroke="#3A3E40" stroke-width="1.2"/></svg>
<div class="t n" style="left:708px;top:149px;">: 8301</div>
<svg class="a" style="left:752px;top:140px;" width="34" height="28" viewBox="0 0 34 28"><path d="M14.5 4.5 L23.5 9.5 L23.5 19.5 L14.5 24.5 L5.5 19.5 L5.5 9.5 Z" fill="#C4C4C8"/><path d="M5.5 9.5 L14.5 15.5 L14.5 24.5 L5.5 19.5 Z" fill="#A8A8AC"/><path d="M14.5 15.5 L23.5 9.5 L23.5 19.5 L14.5 24.5 Z" fill="#D8D8DA"/><g fill="none" stroke="#6A4E30" stroke-width="1.6" stroke-linejoin="round"><path d="M14.5 4.5 L23.5 9.5 L23.5 19.5 L14.5 24.5 L5.5 19.5 L5.5 9.5 Z"/><path d="M14.5 4.5 L14.5 13 M14.5 13 L6 18.5 M14.5 13 L23 18.5"/><path d="M14.5 24.5 L14.5 15.5 M14.5 15.5 L5.5 9.5 M14.5 15.5 L23.5 9.5"/></g><path d="M6 9.5 L14.5 5 L23 9.5" stroke="#E8D8C0" stroke-width=".9" fill="none"/></svg>
<div class="t n" style="left:784px;top:149px;">: 8301</div>
<svg class="a" style="left:598px;top:166px;" width="22" height="30" viewBox="0 0 22 30"><defs><radialGradient id="emG" cx=".5" cy=".5" r=".5"><stop offset="0" stop-color="#1E6C94"/><stop offset=".75" stop-color="#2C88B0"/><stop offset="1" stop-color="#7CC4DC" stop-opacity=".3"/></radialGradient></defs><ellipse cx="11" cy="14" rx="7.5" ry="6.5" fill="url(#emG)"/><path d="M5.5 11 L12 9.5 L11.5 12.5 L18 14.5 L11.5 18 L12 15 L6 13.5 Z" fill="#D8FFF8"/></svg>
<svg class="a" style="left:617px;top:170px;" width="7" height="24" viewBox="0 0 7 24"><path d="M1 0.5 L1 23" stroke="#7E8082" stroke-width="1.5"/><path d="M2.5 3 L2.5 21" stroke="#C8CACC" stroke-width="1"/><path d="M4 2 Q5.8 12 5.2 19 Q4.8 21 3.5 22.5" stroke="#A8AAAC" stroke-width="1" fill="none"/></svg>
<div class="t n" style="left:626px;top:169px;">12%</div>
<div class="t n" style="left:626px;top:181px;">77.5%</div>
<svg class="a" style="left:652px;top:166px;" width="22" height="30" viewBox="0 0 22 30"><g fill="none" stroke-linecap="round"><path d="M6 11 Q9 8.5 12 11 T19.5 10" stroke="#E03A18" stroke-width="2.2"/><path d="M6.5 15 Q9.5 12.5 12.5 15 T20 14" stroke="#E03A18" stroke-width="2.2"/><path d="M6 19 Q9 16.5 12 19 T19.5 18" stroke="#E03A18" stroke-width="2.2"/><path d="M15 10.5 L19 9.5 M15.5 14.5 L19.5 13.5 M15 18.5 L19 17.5" stroke="#FFB050" stroke-width="1.1"/></g></svg>
<svg class="a" style="left:673px;top:170px;" width="7" height="24" viewBox="0 0 7 24"><path d="M1 0.5 L1 23" stroke="#7E8082" stroke-width="1.5"/><path d="M2.5 3 L2.5 21" stroke="#C8CACC" stroke-width="1"/><path d="M4 2 Q5.8 12 5.2 19 Q4.8 21 3.5 22.5" stroke="#A8AAAC" stroke-width="1" fill="none"/></svg>
<div class="t n" style="left:681px;top:169px;">29.6%</div>
<div class="t n" style="left:681px;top:181px;">71.9%</div>
<svg class="a" style="left:710px;top:166px;" width="22" height="30" viewBox="0 0 22 30"><defs><radialGradient id="kiG"><stop offset="0" stop-color="#fff"/><stop offset=".45" stop-color="#F4F8F8"/><stop offset="1" stop-color="#B8C0C0" stop-opacity="0"/></radialGradient><linearGradient id="kiS" x1="0" y1="0" x2="1" y2="0"><stop offset="0" stop-color="#8A9A98" stop-opacity="0"/><stop offset="1" stop-color="#4A5A58"/></linearGradient></defs>
<path d="M4 13.5 L15 13 L15 16.5 L4 15.5 Z" fill="url(#kiS)"/><path d="M10 8 L16 12.5 L14 14.5 Z" fill="#7A8A88"/><path d="M9 21 L15.5 15.5 L17 17.5 Z" fill="#2A3434"/><path d="M8 10.5 L14 14" stroke="#9AA8A6" stroke-width="1"/><circle cx="16" cy="14.8" r="4.5" fill="url(#kiG)"/></svg>
<svg class="a" style="left:729px;top:170px;" width="7" height="24" viewBox="0 0 7 24"><path d="M1 0.5 L1 23" stroke="#7E8082" stroke-width="1.5"/><path d="M2.5 3 L2.5 21" stroke="#C8CACC" stroke-width="1"/><path d="M4 2 Q5.8 12 5.2 19 Q4.8 21 3.5 22.5" stroke="#A8AAAC" stroke-width="1" fill="none"/></svg>
<div class="t n" style="left:737px;top:169px;">47.2%</div>
<div class="t n" style="left:737px;top:181px;">60.7%</div>
<svg class="a" style="left:766px;top:166px;" width="22" height="30" viewBox="0 0 22 30"><defs><radialGradient id="exG" cx=".65" cy=".5" r=".55"><stop offset="0" stop-color="#FFFFF4"/><stop offset=".25" stop-color="#FFE8A0"/><stop offset=".5" stop-color="#E07028"/><stop offset="1" stop-color="#E07028" stop-opacity="0"/></radialGradient></defs>
<rect x="5.5" y="8" width="13.5" height="15" rx="2" fill="#3A2C24"/><g fill="#D86A2A"><rect x="6" y="9" width="2" height="2"/><rect x="9" y="20" width="2" height="2"/><rect x="16" y="8.5" width="2" height="1.5"/><rect x="6" y="17" width="1.5" height="2"/><rect x="17" y="20" width="1.5" height="2"/></g><g fill="#4A8A9A"><rect x="7" y="13" width="1.5" height="2"/><rect x="12" y="21" width="1.5" height="1.5"/></g><rect x="5.5" y="8" width="13.5" height="15" fill="url(#exG)"/></svg>
<svg class="a" style="left:785px;top:170px;" width="7" height="24" viewBox="0 0 7 24"><path d="M1 0.5 L1 23" stroke="#7E8082" stroke-width="1.5"/><path d="M2.5 3 L2.5 21" stroke="#C8CACC" stroke-width="1"/><path d="M4 2 Q5.8 12 5.2 19 Q4.8 21 3.5 22.5" stroke="#A8AAAC" stroke-width="1" fill="none"/></svg>
<div class="t n" style="left:793px;top:169px;">64.8%</div>
<div class="t n" style="left:793px;top:181px;">62.1%</div>
<div class="grp" style="left:597px;top:205px;width:72px;height:34px"></div>
<div class="t" style="left:605px;top:200px;color:#2356BC;background:#EBE9ED;padding:0 1px">Defence</div>
<svg class="a" style="left:598px;top:208px;" width="34" height="30" viewBox="0 0 34 30"><defs><linearGradient id="dfG" x1="0" y1="0" x2="1" y2="0"><stop offset="0" stop-color="#8A7A5A"/><stop offset=".22" stop-color="#F0F4F0"/><stop offset=".45" stop-color="#6A5438"/><stop offset=".75" stop-color="#3E4630"/><stop offset="1" stop-color="#8A9878"/></linearGradient></defs>
<path d="M7 7 Q16 3.5 25 7 L25.5 16 Q24 24 16 26.5 Q8 24 6.5 16 Z" fill="#7EE8F0" opacity=".55"/>
<path d="M9 7.5 Q16 5.5 23.5 7.5 L23.5 16 Q22.5 22 16 24.5 Q9.5 22 9 16 Z" fill="url(#dfG)"/><path d="M9 7.5 Q16 5.5 23.5 7.5" stroke="#3a3020" stroke-width="1" fill="none"/></svg>
<div class="t n" style="left:629px;top:211px;">: 18</div>
<div class="t n" style="left:629px;top:223px;">: 18</div>
<div class="grp" style="left:676px;top:205px;width:152px;height:34px"></div>
<div class="t" style="left:684px;top:200px;color:#2356BC;background:#EBE9ED;padding:0 1px">Capacitor</div>
<svg class="a" style="left:676px;top:208px;" width="34" height="30" viewBox="0 0 34 30"><defs><linearGradient id="cpG" x1="0" y1="0" x2="1" y2="0"><stop offset="0" stop-color="#7A5A38"/><stop offset=".3" stop-color="#F4EEE6"/><stop offset=".5" stop-color="#6A4A2C"/><stop offset="1" stop-color="#2E2014"/></linearGradient></defs>
<path d="M8 16.5 L15.5 5.5 Q18 4 20.5 6 L21.5 8 L14 19.5 Q11 21.5 9 20 Z" fill="url(#cpG)" transform="rotate(0)"/><ellipse cx="18.5" cy="6.5" rx="3" ry="2" transform="rotate(35 18.5 6.5)" fill="#E8E0D4"/>
<path d="M18 13 L24 10.5 L20.5 17 L23 16.5 L15.5 26 L18 18.5 L16 19 Z" fill="#E8D8B0"/><path d="M18.5 13.5 L22.5 11.5 L20 16" fill="#FFF8E8"/></svg>
<div class="t n" style="left:708px;top:216px;">: 6375</div>
<svg class="a" style="left:756px;top:208px;" width="34" height="30" viewBox="0 0 34 30"><defs><linearGradient id="cbG" x1="0" y1="0" x2="0" y2="1"><stop offset="0" stop-color="#E8DCB0"/><stop offset=".5" stop-color="#A89868"/><stop offset="1" stop-color="#4A4028"/></linearGradient></defs>
<path d="M6.5 16 L13 21.5 L20 25 L13 25 L6 19 Z" fill="#4A3A22"/><path d="M7 10 Q8 5 14 6 L24 12 L20 21 L10 17 Q6 14 7 10 Z" fill="url(#cbG)"/><path d="M10 8.5 Q13 7.5 17 10" stroke="#FFFCE8" stroke-width="1.3" fill="none"/>
<path d="M19 12.5 L25 13 L27.5 18 L23 23 L18 20 Z" fill="#5A5E62"/><circle cx="22" cy="17" r="2.2" fill="#C8CCD0"/></svg>
<div class="t n" style="left:788px;top:211px;">- 6</div>
<div class="t n" style="left:788px;top:223px;">+52.9</div>
<div class="grp" style="left:597px;top:248px;width:72px;height:58px"></div>
<div class="t" style="left:605px;top:243px;color:#2356BC;background:#EBE9ED;padding:0 1px">Firepower</div>
<svg class="a" style="left:598px;top:251px;" width="34" height="50" viewBox="0 0 34 50"><defs><linearGradient id="tuG" x1="0" y1="0" x2="0" y2="1"><stop offset="0" stop-color="#F0F4F6"/><stop offset=".5" stop-color="#8A969C"/><stop offset="1" stop-color="#2A3034"/></linearGradient></defs>
<path d="M9 15 L26 12 L30 15 L14 19 Z" fill="#C8C6CA"/>
<path d="M3 10 L16 7 L18 10.5 L5.5 13.5 Z" fill="url(#tuG)"/><path d="M14.5 5 L24 4 L25.5 8 L22.5 11 L16 11 Z" fill="url(#tuG)"/><path d="M22 5.5 L25 7" stroke="#1A1A1A" stroke-width="1.3"/>
<path d="M16.5 10.5 L22 10.5 L22 18 L16.5 18 Z" fill="#5A5448"/><path d="M18 11 L18 17" stroke="#E0E4E6" stroke-width="1"/>
<path d="M12.5 18 L21 16.5 L24 22 L15 25 Z" fill="#8EA4B0"/><path d="M13.5 19 L16 24" stroke="#E8F0F4" stroke-width="1.2"/><path d="M20 17 L23.5 22" stroke="#A07848" stroke-width="1.5"/></svg>
<div class="t n" style="left:629px;top:259px;">: 304</div>
<svg class="a" style="left:598px;top:251px;" width="34" height="50" viewBox="0 0 34 50"><defs><linearGradient id="vlG" x1="0" y1="0" x2="1" y2="0"><stop offset="0" stop-color="#2A2A2A" stop-opacity="0"/><stop offset=".6" stop-color="#4A5458" stop-opacity=".7"/><stop offset="1" stop-color="#101212"/></linearGradient></defs>
<path d="M7 32 L21 30.5 Q23.5 31.5 22.5 34 L9 34 Z" fill="url(#vlG)"/><path d="M15 31 L21 30.8" stroke="#C8E0E4" stroke-width="1"/>
<path d="M11 38 L26 36 Q29 37.5 27.5 40 L13 40.5 Z" fill="url(#vlG)"/><path d="M20 36.8 L26 36.3" stroke="#C8E0E4" stroke-width="1"/>
<path d="M6 44 L17 42 Q19.5 43.5 18.5 46 L8 46 Z" fill="url(#vlG)"/><path d="M12 42.8 L17 42.3" stroke="#C8E0E4" stroke-width="1"/></svg>
<div class="t n" style="left:629px;top:283px;">: 2673</div>
<div class="grp" style="left:676px;top:248px;width:152px;height:58px"></div>
<div class="t" style="left:684px;top:243px;color:#2356BC;background:#EBE9ED;padding:0 1px">Targeting</div>
<svg class="a" style="left:676px;top:251px;" width="34" height="50" viewBox="0 0 34 50"><circle cx="14.8" cy="14.8" r="10.3" fill="#DCE6EA" stroke="#B4C4C8" stroke-width="1.2"/><path d="M5 12 Q8 5 15 4.5 L15 16 Z" fill="#CFE4EA"/><path d="M15 16 L23.5 6.5" stroke="#2A3034" stroke-width="1.6"/><path d="M15 16 L22 8 L18 7 Z" fill="#7ECEDC"/><path d="M6 21 Q10 25.5 16 25" stroke="#9AAAAE" stroke-width="1" fill="none"/>
<path d="M12 30 Q20 30 23.5 40 Q20 45 15 44 Z" fill="#C8B89C"/><path d="M13 31 Q19 32 22 39" stroke="#F4EEE4" stroke-width="1.2" fill="none"/><path d="M13 31 L21 42 M12.5 36 L22 36" stroke="#7A6040" stroke-width=".8"/>
<path d="M14 38 L8 43 M12 40 L6 47 M14 42 L11 48 M10 38 L6 39" stroke="#7A5834" stroke-width="1.6" stroke-linecap="round"/></svg>
<div class="t" style="left:708px;top:259px;">: 144 km</div>
<svg class="a" style="left:764px;top:251px;" width="34" height="50" viewBox="0 0 34 50"><defs><radialGradient id="tcG" cx=".45" cy=".4"><stop offset="0" stop-color="#F0F0F0"/><stop offset=".7" stop-color="#C0BCB8"/><stop offset="1" stop-color="#8A8480"/></radialGradient></defs>
<path d="M15.6 3.5 L15.6 26 M4 14.8 L27 14.8" stroke="#9A8A70" stroke-width="1.3"/><circle cx="15.6" cy="14.8" r="9" fill="url(#tcG)"/><circle cx="15.6" cy="14.8" r="8" fill="none" stroke="#B8884E" stroke-width="1.4"/><circle cx="15.6" cy="14.8" r="4.5" fill="none" stroke="#A89A88" stroke-width="1"/><path d="M15.6 8 L15.6 21.5 M9 14.8 L22.5 14.8" stroke="#A89A88" stroke-width="1"/>
<circle cx="16.5" cy="38.7" r="10" fill="#F4F4F6" stroke="#A4A8AC" stroke-width=".9"/><circle cx="16.5" cy="38.7" r="5.6" fill="#E8EEF2" stroke="#4A4E52" stroke-width="1.5"/><circle cx="16.5" cy="38.7" r="2.2" fill="#C8DCE4" stroke="#3A3E42" stroke-width="1.2"/></svg>
<div class="t n" style="left:796px;top:259px;">: 4</div>
<div class="t" style="left:708px;top:283px;">: 97.9 mm</div>
<div class="t n" style="left:796px;top:283px;">: 22</div>
<div class="grp" style="left:597px;top:314px;width:231px;height:35px"></div>
<div class="t" style="left:605px;top:309px;color:#2356BC;background:#EBE9ED;padding:0 1px">Mobility</div>
<svg class="a" style="left:598px;top:316px;" width="34" height="30" viewBox="0 0 34 30"><defs><linearGradient id="spG" x1="0" y1="0" x2="1" y2="1"><stop offset="0" stop-color="#A87A48"/><stop offset=".4" stop-color="#F8F6F2"/><stop offset=".8" stop-color="#D8C8B4"/><stop offset="1" stop-color="#6A4A2A"/></linearGradient></defs>
<path d="M6 12 Q6.5 8 11 8 L18 11.5 L14.5 21 Q9 20.5 6.5 16 Z" fill="url(#spG)"/><path d="M7 10 Q9 8.5 11 9" stroke="#8A5E34" stroke-width="1.2" fill="none"/><path d="M13 11 L19 11.5 L25.5 20.5 L16 22 Z" fill="#3CD6D8"/><path d="M15.5 13 L23 20" stroke="#B8FFFF" stroke-width="1.2"/><path d="M8 18 L13 21" stroke="#5A3A1E" stroke-width="1"/></svg>
<div class="t" style="left:628px;top:325px;">: 104 m/s</div>
<svg class="a" style="left:678px;top:314px;" width="34" height="32" viewBox="0 0 34 32"><defs><radialGradient id="alG" cx=".35" cy=".3"><stop offset="0" stop-color="#C8E4F8"/><stop offset=".5" stop-color="#5AA0D8"/><stop offset="1" stop-color="#2A6CA8"/></radialGradient></defs>
<path d="M16.3 5 L16.3 10" stroke="#606468" stroke-width="2"/><path d="M9 9 L11 11" stroke="#808488" stroke-width="1.5"/><circle cx="16.9" cy="16.3" r="7.2" fill="url(#alG)" stroke="#6A7074" stroke-width="1.2"/><path d="M16.9 11.5 L16.9 17" stroke="#1A3A5A" stroke-width="1.4"/>
<g fill="#4A90C8"><path d="M4 29 L7.5 23 L10 23 L6.5 29 Z"/><path d="M9 29 L12 23 L14.5 23 L12 29 Z"/><path d="M14 29 L16 23 L18.5 23 L17 29 Z"/><path d="M19 29 L20.5 23 L23 23 L22.5 29 Z"/><path d="M24 29 L24 23 L31 26 Z"/></g></svg>
<div class="t" style="left:709px;top:325px;">: 16.4 s</div>
<svg class="a" style="left:744px;top:314px;" width="34" height="32" viewBox="0 0 34 32"><path d="M6 14 Q8 8 14 7 Q19 7 20 10 L15 25 Q8 22 6 18 Z" fill="#62DCDE"/><path d="M7 16 L9 21" stroke="#A87840" stroke-width="1.2"/>
<circle cx="17.5" cy="19" r="5.5" fill="#A88A64"/><path d="M14 17 Q16 14 19 15.5 Q21 18 19 20 Q17 21 16.5 19" stroke="#F4EEE6" stroke-width="1.4" fill="none"/><path d="M12.5 23.5 L17 27 L23 25" stroke="#6A4A28" stroke-width="1.8" fill="none"/></svg>
<div class="t" style="left:771px;top:325px;">: 3 au/s</div>
<div class="t" style="left:596px;top:359px;">Signature: 460 m2</div>
<div class="t" style="left:716px;top:359px;">Cargohold: 665 m3</div>
</body></html>
